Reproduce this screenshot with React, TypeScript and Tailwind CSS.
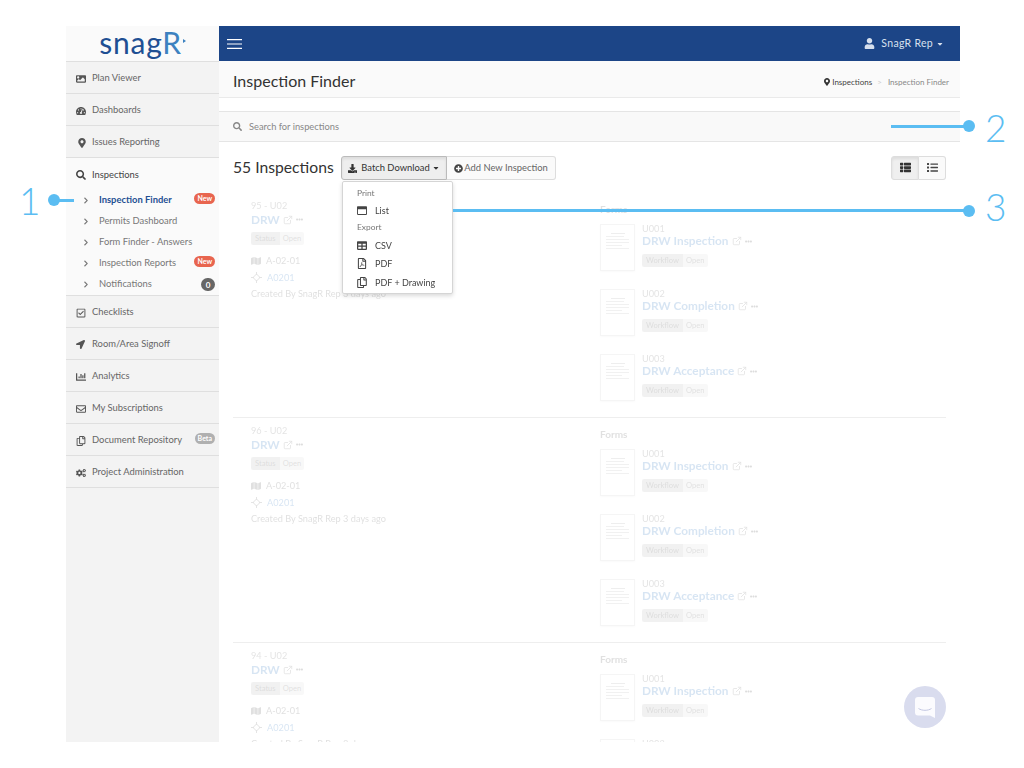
import type { ReactNode } from "react";
import {
  FaImage, FaTachometerAlt, FaMapMarkerAlt, FaSearch, FaRegCheckSquare, FaLocationArrow, FaChartBar,
  FaRegEnvelope, FaRegCopy, FaCogs, FaDownload, FaPlusCircle, FaThList, FaList, FaUser, FaTable,
  FaRegFilePdf, FaMap, FaRegWindowMaximize, FaChevronRight, FaEllipsisH, FaCaretDown,
} from "react-icons/fa";
import { ExternalLink } from "lucide-react";

const mainMenuTop = [
  { label: "Plan Viewer", icon: <FaImage /> },
  { label: "Dashboards", icon: <FaTachometerAlt /> },
  { label: "Issues Reporting", icon: <FaMapMarkerAlt className="ml-[1px]" /> },
];

const subMenu = [
  { label: "Inspection Finder", active: true, badge: "New" },
  { label: "Permits Dashboard" },
  { label: "Form Finder - Answers" },
  { label: "Inspection Reports", badge: "New" },
  { label: "Notifications", badge: "0" },
];

const mainMenuBottom = [
  { label: "Checklists", icon: <FaRegCheckSquare /> },
  { label: "Room/Area Signoff", icon: <FaLocationArrow className="text-[9px]" /> },
  { label: "Analytics", icon: <FaChartBar /> },
  { label: "My Subscriptions", icon: <FaRegEnvelope /> },
  { label: "Document Repository", icon: <FaRegCopy />, beta: true },
  { label: "Project Administration", icon: <FaCogs /> },
];

function MenuItem({ icon, label, beta }: { icon: ReactNode; label: string; beta?: boolean }) {
  return (
    <div className="flex h-[32px] items-center border-b border-[#dfdfdf] pt-[2px] pr-[4px] pl-[10px] text-[#666]">
      <span className="flex w-[16px] justify-start text-[10px] text-[#555]">{icon}</span>
      <span className="text-[9.4px] whitespace-nowrap">{label}</span>
      {beta && <span className="mb-[4px] ml-auto rounded-full bg-[#b0b0b0] px-[3px] text-[7px] leading-[11px] font-bold text-white">Beta</span>}
    </div>
  );
}

function Sidebar() {
  return (
    <aside className="flex w-[153px] shrink-0 flex-col bg-[#f3f3f3]">
      <div className="flex h-[36px] items-center justify-center border-b border-[#dfdfdf] bg-[#fafafa] pr-[4px] pb-[4px]">
        <span className="relative text-[30px] leading-none tracking-[0.8px] text-[#1f4f93]">
          snag<span className="text-[#3d82c0]">R</span>
          <span className="absolute top-[12px] right-[-4px] h-0 w-0 border-y-[2px] border-l-[3px] border-y-transparent border-l-[#3d82c0]" />
        </span>
      </div>
      {mainMenuTop.map((m) => (
        <MenuItem key={m.label} icon={m.icon} label={m.label} />
      ))}
      <div className="border-b border-[#dfdfdf] bg-[#fafafa]">
        <div className="flex h-[32px] items-center pt-[2px] pl-[10px] text-[#444]">
          <span className="flex w-[16px] text-[10px]"><FaSearch /></span>
          <span className="text-[9.4px]">Inspections</span>
        </div>
        {subMenu.map((s) => (
          <div key={s.label} className="flex h-[21px] items-center pr-[4px] pl-[17px]">
            <FaChevronRight className="mr-[10px] w-[6px] text-[7px] text-[#777]" />
            <span className={s.active ? "text-[9.4px] font-bold text-[#1f4f93]" : "text-[9.4px] text-[#777]"}>{s.label}</span>
            {s.badge === "New" && <span className="mb-[4px] ml-auto rounded-full bg-[#e8654f] px-[3px] text-[7px] leading-[11px] font-bold text-white">New</span>}
            {s.badge === "0" && <span className="ml-auto flex h-[13px] w-[14px] items-center justify-center rounded-full bg-[#666] text-[8px] font-bold text-white">0</span>}
          </div>
        ))}
      </div>
      {mainMenuBottom.map((m) => (
        <MenuItem key={m.label} icon={m.icon} label={m.label} beta={m.beta} />
      ))}
    </aside>
  );
}

function Tag({ left, right }: { left: string; right: string }) {
  return (
    <div className="flex h-[13px] w-fit text-[7.6px] leading-[13px]">
      <span className="rounded-l-[2px] bg-[#bbb] px-[4px] text-[#555]">{left}</span>
      <span className="rounded-r-[2px] bg-[#ddd] px-[3px] text-[#666]">{right}</span>
    </div>
  );
}

function DocThumb() {
  return (
    <div className="flex h-[47px] w-[35px] shrink-0 flex-col gap-[2px] border border-[#ccc] px-[5px] pt-[8px] shadow-sm">
      <div className="mx-auto h-[1px] w-[14px] bg-[#aaa]" />
      <div className="h-[1px] w-[18px] bg-[#bbb]" />
      <div className="h-[1px] w-full bg-[#bbb]" />
      <div className="h-[1px] w-full bg-[#bbb]" />
      <div className="h-[1px] w-[16px] bg-[#bbb]" />
      <div className="h-[1px] w-full bg-[#bbb]" />
    </div>
  );
}

function FormCard({ code, title }: { code: string; title: string }) {
  return (
    <div className="flex h-[65px] gap-[7px]">
      <DocThumb />
      <div className="-mt-[1px]">
        <div className="text-[9.2px] leading-[12px] text-[#777]">{code}</div>
        <div className="-mt-[1px] flex items-center gap-[3px] text-[11.8px] leading-[14px] font-bold text-[#3b7ec4]">
          {title}
          <ExternalLink size={10} className="text-[#777]" />
          <FaEllipsisH className="text-[7px] text-[#555]" />
        </div>
        <div className="mt-[6px]"><Tag left="Workflow" right="Open" /></div>
      </div>
    </div>
  );
}

function TargetMark() {
  return (
    <svg width="11" height="11" viewBox="0 0 11 11" fill="none" stroke="#777" strokeWidth="1">
      <path d="M5.5 2 9 5.5 5.5 9 2 5.5z" />
      <path d="M5.5 0v3M5.5 8v3M0 5.5h3M8 5.5h3" />
    </svg>
  );
}

function InspectionRow({ num, age }: { num: string; age: string }) {
  return (
    <div className="flex h-[225px] shrink-0 border-b border-[#aaa] pt-[7px]">
      <div className="w-[367px] pl-[18px]">
        <div className="text-[9.2px] leading-[12px] text-[#777]">{num} - U02</div>
        <div className="flex h-[15px] items-center gap-[3px] text-[11.8px] font-bold text-[#3b7ec4]">
          DRW
          <ExternalLink size={10} className="text-[#777]" />
          <FaEllipsisH className="text-[7px] text-[#555]" />
        </div>
        <div className="mt-[5px]"><Tag left="Status" right="Open" /></div>
        <div className="mt-[7px] flex h-[17px] items-center gap-[5px] text-[9.2px] text-[#666]">
          <FaMap className="text-[10px]" />A-02-01
        </div>
        <div className="flex h-[17px] items-center gap-[5px] text-[9.2px] text-[#3b7ec4]">
          <TargetMark />A0201
        </div>
        <div className="mt-[1px] text-[9.2px] text-[#666]">Created By SnagR Rep {age}</div>
      </div>
      <div>
        <div className="mt-[2px] mb-[8px] text-[10px] leading-[14px] font-bold text-[#666]">Forms</div>
        <FormCard code="U001" title="DRW Inspection" />
        <FormCard code="U002" title="DRW Completion" />
        <FormCard code="U003" title="DRW Acceptance" />
      </div>
    </div>
  );
}

function BatchMenu() {
  const row = "flex h-[18.5px] items-center text-[9px] text-[#444]";
  const ico = "mr-[8px] ml-[14px] w-[10px] text-[11px] text-[#444]";
  return (
    <div className="absolute top-[25px] left-[1px] z-20 h-[113px] w-[111px] rounded-[2px] border border-[#d5d5d5] bg-white pt-[6px] shadow-[0_2px_4px_rgba(0,0,0,0.15)]">
      <div className="mb-[3px] pl-[14px] text-[8.4px] leading-[11px] text-[#777]">Print</div>
      <div className={row}><FaRegWindowMaximize className={ico} />List</div>
      <div className="mt-[2px] mb-[3px] pl-[14px] text-[8.4px] leading-[11px] text-[#777]">Export</div>
      <div className={row}><FaTable className={ico} />CSV</div>
      <div className={row}><FaRegFilePdf className={ico} />PDF</div>
      <div className={row}><FaRegCopy className={ico} />PDF + Drawing</div>
    </div>
  );
}

function Main() {
  return (
    <div className="flex min-w-0 flex-1 flex-col bg-white">
      <header className="flex h-[35px] shrink-0 items-center justify-between bg-[#1c4587] pr-[16px] pl-[8px] text-[#d7e0ee]">
        <svg width="15" height="10" viewBox="0 0 15 10" stroke="#fff" strokeWidth="1.2">
          <path d="M0 .6h15M0 5h15M0 9.4h15" />
        </svg>
        <div className="flex items-center text-[10.5px]">
          <FaUser className="mr-[6px] text-[11px]" />
          <span className="tracking-[0.3px]">SnagR Rep</span>
          <FaCaretDown className="ml-[3px] text-[8px]" />
        </div>
      </header>
      <div className="flex h-[37px] shrink-0 items-center justify-between border-b border-[#eaeaea] bg-[#fafafa] pt-[3px] pr-[11px] pl-[14px]">
        <h1 className="text-[16px] text-[#333]">Inspection Finder</h1>
        <div className="flex items-center pt-[2px] text-[8px]">
          <FaMapMarkerAlt className="mr-[1px] text-[8px] text-[#333]" />
          <span className="text-[#444]">Inspections</span>
          <span className="mx-[5px] text-[#ccc]">&gt;</span>
          <span className="ml-[1px] text-[#888]">Inspection Finder</span>
        </div>
      </div>
      <div className="mt-[13px] flex h-[31px] shrink-0 items-center border-y border-[#e5e5e5] bg-[#f9f9f9] pl-[14px] text-[9.3px] text-[#888]">
        <FaSearch className="mr-[7px] text-[9px]" />
        <span>Search for inspections</span>
      </div>
      <div className="flex h-[51px] shrink-0 items-center px-[14px]">
        <span className="mr-[7px] w-[101px] pt-[1px] text-[15.7px] whitespace-nowrap text-[#333]">55 Inspections</span>
        <div className="relative flex">
          <div className="flex h-[24px] w-[106px] items-center justify-center rounded-l-[3px] border border-[#bbb] bg-[#eee] pt-[1px] text-[9.4px] text-[#333] shadow-[inset_0_2px_3px_rgba(0,0,0,0.08)]">
            <FaDownload className="mr-[4px] text-[9px]" />Batch Download<FaCaretDown className="ml-[2px] text-[8px]" />
          </div>
          <div className="flex h-[24px] w-[109px] items-center justify-center rounded-r-[3px] border border-l-0 border-[#ddd] bg-[#fafafa] pt-[1px] text-[9.4px] text-[#666]">
            <FaPlusCircle className="mr-[1px] text-[9px] text-[#444]" />Add New Inspection
          </div>
          <BatchMenu />
        </div>
        <div className="ml-auto flex">
          <div className="flex h-[24px] w-[28px] items-center justify-center rounded-l-[3px] border border-[#ddd] bg-[#efefef] text-[11px] text-[#333] shadow-[inset_0_2px_3px_rgba(0,0,0,0.08)]"><FaThList /></div>
          <div className="flex h-[24px] w-[27px] items-center justify-center rounded-r-[3px] border border-l-0 border-[#ddd] bg-[#fafafa] text-[11px] text-[#444]"><FaList /></div>
        </div>
      </div>
      <div className="mx-[14px] flex min-h-0 flex-1 flex-col overflow-hidden opacity-[0.2]">
        <InspectionRow num="95" age="3 days ago" />
        <InspectionRow num="96" age="3 days ago" />
        <InspectionRow num="94" age="3 days ago" />
      </div>
    </div>
  );
}

function Callout({ className, lineClass, digit, digitClass }: { className: string; lineClass: string; digit: string; digitClass: string }) {
  return (
    <>
      <div className={`absolute z-30 h-[3px] bg-[#5bbdf2] ${className} ${lineClass}`} />
      <div className={`absolute z-30 text-[37px] leading-none font-light text-[#5bbdf2] ${digitClass}`}>{digit}</div>
    </>
  );
}

export default function App() {
  return (
    <div className="relative h-[768px] w-[1024px] overflow-hidden bg-white pt-[26px] pl-[66px] font-['Lato',sans-serif]">
      <div className="flex h-[716px] w-[894px]">
        <Sidebar />
        <Main />
      </div>

      {/* chat bubble */}
      <div className="absolute top-[686px] left-[904px] z-30 flex h-[42px] w-[42px] items-center justify-center rounded-full bg-[#d9dcee]">
        <svg width="20" height="21" viewBox="0 0 20 21">
          <path d="M3 0h14a3 3 0 0 1 3 3v18l-5-2.5H3a3 3 0 0 1-3-3V3a3 3 0 0 1 3-3z" fill="#fbfbfe" />
          <path d="M3.5 11.5c3.5 2.4 9.5 2.4 13 0" stroke="#c3c7e2" strokeWidth="1" fill="none" />
        </svg>
      </div>

      {/* annotations */}
      <Callout className="top-[199px] left-[53px]" lineClass="w-[21px]" digit="1" digitClass="top-[182px] left-[19px]" />
      <div className="absolute top-[194px] left-[48px] z-30 h-[12px] w-[12px] rounded-full bg-[#5bbdf2]" />
      <Callout className="top-[125px] left-[891px]" lineClass="w-[78px]" digit="2" digitClass="top-[109px] left-[985px]" />
      <div className="absolute top-[120px] left-[963px] z-30 h-[12px] w-[12px] rounded-full bg-[#5bbdf2]" />
      <Callout className="top-[209px] left-[453px]" lineClass="w-[516px]" digit="3" digitClass="top-[188px] left-[985px]" />
      <div className="absolute top-[205px] left-[963px] z-30 h-[12px] w-[12px] rounded-full bg-[#5bbdf2]" />
    </div>
  );
}
